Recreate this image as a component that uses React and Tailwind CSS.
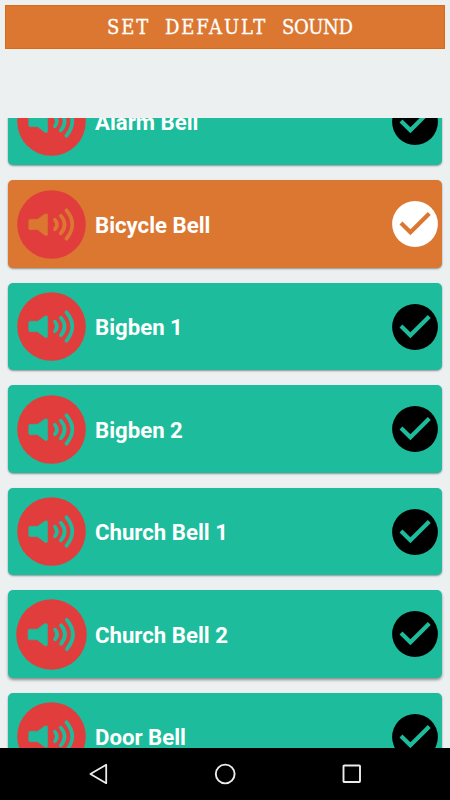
import clsx from "clsx";

const sounds = [
  { name: "Alarm Bell" },
  { name: "Bicycle Bell", selected: true },
  { name: "Bigben 1" },
  { name: "Bigben 2" },
  { name: "Church Bell 1" },
  { name: "Church Bell 2", large: true },
  { name: "Door Bell" },
];

function SpeakerIcon({ large }) {
  return (
    <svg
      viewBox="0 0 69 69"
      className={clsx("shrink-0", large ? "-m-px size-[71px]" : "size-[69px]")}
    >
      <circle cx="34.5" cy="34.5" r="34.3" fill="#e23d3d" />
      <path
        d="M13.2 29.3H20.6L27.2 24.4Q30.6 22.6 30.6 25.4V44Q30.6 46.8 27.2 44.8L20.6 39.7H13.2Q11.7 39.7 11.7 38.2V30.8Q11.7 29.3 13.2 29.3Z"
        fill="currentColor"
        stroke="currentColor"
        strokeWidth="0.5"
      />
      <g
        fill="none"
        stroke="currentColor"
        strokeWidth="3.7"
        strokeLinecap="round"
      >
        <path d="M38 29.8Q41.8 34.5 38 39.2" />
        <path d="M43.8 25.6Q51.4 34.5 43.8 43.4" />
        <path d="M49.4 20.3Q61.2 34.5 49.4 48.7" />
      </g>
    </svg>
  );
}

function CheckIcon({ selected }) {
  return (
    <svg viewBox="0 0 46 46" className="size-[46px] shrink-0">
      <circle cx="23" cy="23" r="22.9" fill={selected ? "#fff" : "#000"} />
      <path
        d="M9 21.9L18.4 31.2L37.3 12.4"
        fill="none"
        stroke="currentColor"
        strokeWidth="4.2"
      />
    </svg>
  );
}

function SoundCard({ sound }) {
  return (
    <div
      className={clsx(
        "flex h-[87.2px] shrink-0 items-center rounded-[5px] pl-[9.3px] pr-[4px]",
        sound.large
          ? "shadow-[0_2px_3px_rgba(0,0,0,0.4)]"
          : "shadow-[0_1px_2px_rgba(0,0,0,0.4)]",
        sound.selected
          ? "bg-[#db7731] text-[#db7731]"
          : "bg-[#1cbc9c] text-[#1cbc9c]"
      )}
    >
      <SpeakerIcon large={sound.large} />
      <span className="ml-[8.7px] flex-1 whitespace-nowrap pt-[1.4px] text-[22.2px] font-bold leading-none text-white">
        {sound.name}
      </span>
      <CheckIcon selected={sound.selected} />
    </div>
  );
}

function NavBar() {
  return (
    <div className="flex h-[52px] shrink-0 items-center justify-between bg-black pl-[87px] pr-[86px] text-[#ececec]">
      <svg viewBox="0 0 24 24" className="size-6" fill="none" stroke="currentColor">
        <path d="M19.2 2.8V21.2L3.4 12Z" strokeWidth="1.8" strokeLinejoin="round" />
      </svg>
      <svg viewBox="0 0 24 24" className="size-6" fill="none" stroke="currentColor">
        <circle cx="11.2" cy="12" r="9.4" strokeWidth="1.9" />
      </svg>
      <svg viewBox="0 0 24 24" className="size-6" fill="none" stroke="currentColor">
        <rect x="3.5" y="3.5" width="16.5" height="16.5" rx="0.8" strokeWidth="1.9" />
      </svg>
    </div>
  );
}

export default function App() {
  return (
    <div className="flex h-[800px] w-[450px] flex-col overflow-hidden bg-[#ecf0f1] font-['Roboto',sans-serif]">
      {/* Header */}
      <header className="mx-[5px] mt-[5px] flex h-11 shrink-0 items-center border border-[#dc6a12] bg-[#db7731] pl-[101px]">
        <h1 className="flex whitespace-nowrap font-['DejaVu_Serif_Condensed','DejaVu_Serif',serif] text-[20px] leading-none text-white [-webkit-text-stroke:0.3px_white]">
          <span className="w-[58px] tracking-[1.9px]">SET </span>
          <span className="w-[117px] tracking-[1.9px]">DEFAULT </span>
          <span className="tracking-[-0.4px]">SOUND</span>
        </h1>
      </header>

      {/* Sound list, scrolled part of the way down */}
      <main className="mt-[69px] flex-1 overflow-hidden pl-2 pr-2">
        <div className="-mt-10 flex flex-col gap-[15.3px]">
          {sounds.map((sound) => (
            <SoundCard key={sound.name} sound={sound} />
          ))}
        </div>
      </main>

      <NavBar />
    </div>
  );
}
